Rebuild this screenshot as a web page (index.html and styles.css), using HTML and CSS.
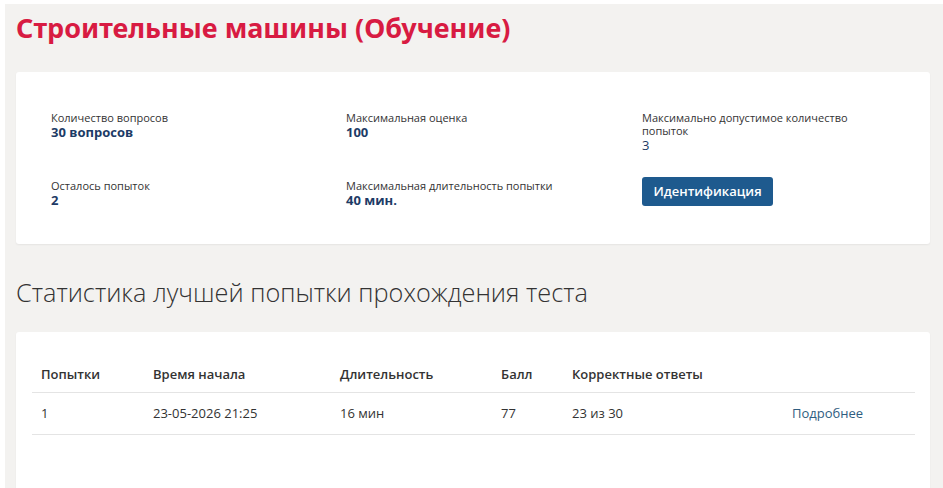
FILE: index.html
```html
<!DOCTYPE html>
<html lang="ru">
<head>
<meta charset="utf-8">
<title>Строительные машины (Обучение)</title>
<link rel="stylesheet" href="styles.css">
</head>
<body>
<div class="page">
  <h1 class="title">Строительные машины (Обучение)</h1>

  <section class="card info-card">
    <div class="info-grid">
      <div class="info">
        <div class="label">Количество вопросов</div>
        <div class="value">30 вопросов</div>
      </div>
      <div class="info">
        <div class="label">Максимальная оценка</div>
        <div class="value">100</div>
      </div>
      <div class="info narrow">
        <div class="label">Максимально допустимое количество попыток</div>
        <div class="value plain">3</div>
      </div>
      <div class="info">
        <div class="label">Осталось попыток</div>
        <div class="value">2</div>
      </div>
      <div class="info">
        <div class="label">Максимальная длительность попытки</div>
        <div class="value">40 мин.</div>
      </div>
      <div class="info">
        <button class="btn" type="button">Идентификация</button>
      </div>
    </div>
  </section>

  <h2 class="section-title">Статистика лучшей попытки прохождения теста</h2>

  <section class="card table-card">
    <table class="stats">
      <colgroup>
        <col class="c1"><col class="c2"><col class="c3"><col class="c4"><col class="c5"><col class="c6">
      </colgroup>
      <thead>
        <tr>
          <th>Попытки</th>
          <th>Время начала</th>
          <th>Длительность</th>
          <th>Балл</th>
          <th>Корректные ответы</th>
          <th></th>
        </tr>
      </thead>
      <tbody>
        <tr>
          <td>1</td>
          <td>23-05-2026 21:25</td>
          <td>16 мин</td>
          <td>77</td>
          <td>23 из 30</td>
          <td><a class="more" href="#">Подробнее</a></td>
        </tr>
      </tbody>
    </table>
  </section>
</div>
</body>
</html>
```

FILE: styles.css
```css
html, body {
  margin: 0;
  padding: 0;
  background: #ffffff;
  height: 100%;
}

body {
  font-family: "Open Sans", "Noto Sans", "DejaVu Sans", sans-serif;
  color: #333333;
  overflow: hidden;
}

.page {
  margin: 4px 0 0 5px;
  background: #f3f2f0;
  padding: 6px 13px 40px 11px;
  min-height: 600px;
}

.title {
  margin: 0;
  font-family: "Noto Sans", "Open Sans", sans-serif;
  font-weight: 700;
  font-size: 27px;
  line-height: 36px;
  color: #d81b42;
  letter-spacing: 0;
}

.card {
  background: #ffffff;
  border-radius: 3px;
  box-shadow: 0 1px 2px rgba(0, 0, 0, 0.06);
}

.info-card {
  margin-top: 26px;
  padding: 39px 20px 37px 35px;
}

.info-grid {
  display: grid;
  grid-template-columns: 295px 296px 1fr;
  row-gap: 27px;
  align-items: start;
}

.info.narrow {
  max-width: 215px;
}

.label {
  font-size: 11px;
  line-height: 13px;
  color: #333333;
}

.value {
  font-size: 13px;
  line-height: 14px;
  margin-top: 1px;
  font-weight: 700;
  color: #1d3b66;
}

.value.plain {
  font-weight: 400;
  font-size: 13px;
}

.btn {
  font-family: "Open Sans", "Noto Sans", sans-serif;
  display: inline-block;
  height: 29px;
  width: 131px;
  margin-top: -2px;
  padding: 0;
  border: none;
  border-radius: 3px;
  background: #1e5a8e;
  color: #ffffff;
  font-size: 13px;
  font-weight: 600;
  line-height: 29px;
  cursor: pointer;
}

.section-title {
  margin: 32px 0 24px 0;
  font-family: "Open Sans", "Noto Sans", sans-serif;
  font-weight: 300;
  font-size: 25.3px;
  line-height: 32px;
  color: #333333;
}

.table-card {
  padding: 25px 15px 60px 16px;
}

.stats {
  width: 100%;
  border-collapse: collapse;
  table-layout: fixed;
}

.c1 { width: 112px; }
.c2 { width: 187px; }
.c3 { width: 161px; }
.c4 { width: 71px; }
.c5 { width: 220px; }
.c6 { width: auto; }

.stats th {
  text-align: left;
  font-size: 13px;
  font-weight: 600;
  line-height: 19px;
  padding: 8px 9px;
  color: #333333;
  border-bottom: 1px solid #e4e4e4;
}

.stats td {
  font-size: 13px;
  line-height: 19px;
  padding: 11px 9px;
  color: #333333;
  border-bottom: 1px solid #e4e4e4;
}

.more {
  color: #2f5d7f;
  text-decoration: none;
}
```
